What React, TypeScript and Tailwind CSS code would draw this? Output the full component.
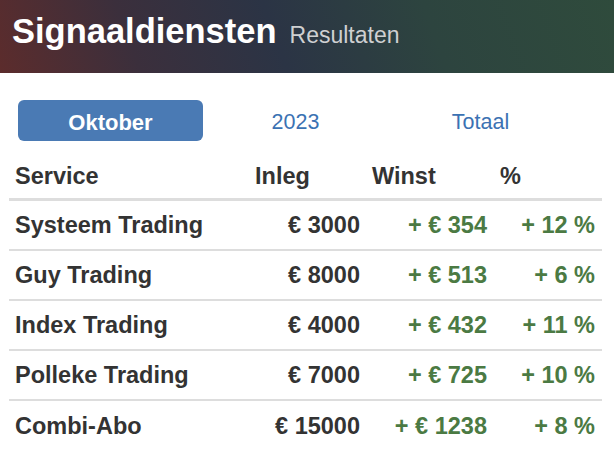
import React from 'react';

type Row = {
  name: string;
  inleg: string;
  winst: string;
  pct: string;
};

const rows: Row[] = [
  { name: 'Systeem Trading', inleg: '€ 3000', winst: '+ € 354', pct: '+ 12 %' },
  { name: 'Guy Trading', inleg: '€ 8000', winst: '+ € 513', pct: '+ 6 %' },
  { name: 'Index Trading', inleg: '€ 4000', winst: '+ € 432', pct: '+ 11 %' },
  { name: 'Polleke Trading', inleg: '€ 7000', winst: '+ € 725', pct: '+ 10 %' },
  { name: 'Combi-Abo', inleg: '€ 15000', winst: '+ € 1238', pct: '+ 8 %' },
];

const tabs = ['Oktober', '2023', 'Totaal'];

export default function App() {
  const active = 'Oktober';

  return (
    <div className="w-[614px] h-[456px] overflow-hidden bg-white font-['Liberation_Sans',Arial,sans-serif] text-[#333]">
      {/* Header */}
      <header className="h-[73px] bg-[linear-gradient(70deg,#5c2c2c_0%,#3b2f3c_22%,#2b3445_45%,#2d443f_70%,#2f4b3c_100%)] pl-[12px] pt-[14px]">
        <div className="flex items-baseline gap-[13px] leading-none">
          <h1 className="text-[34.5px] font-bold text-white">Signaaldiensten</h1>
          <span className="text-[23px] text-[#cfd0d2]">Resultaten</span>
        </div>
      </header>

      {/* Tabs */}
      <nav className="mt-[27px] ml-[18px] flex">
        {tabs.map((tab) => (
          <button
            key={tab}
            className={
              tab === active
                ? 'w-[185px] h-[41px] rounded-[6px] bg-[#4a7ab4] pt-[3px] text-[22px] font-bold text-white'
                : 'w-[185px] h-[41px] pt-[3px] text-[21.5px] text-[#3b72b3]'
            }
          >
            {tab}
          </button>
        ))}
      </nav>

      {/* Table */}
      <div className="ml-[9px] w-[593px] text-[23.5px] font-bold leading-none">
        <div className="grid h-[60px] grid-cols-[239px_118px_128px_108px] items-end border-b-[3px] border-[#dddddd] pb-[10px]">
          <div className="px-[6px]">Service</div>
          <div className="px-[7px]">Inleg</div>
          <div className="px-[6px]">Winst</div>
          <div className="px-[6px]">%</div>
        </div>
        {rows.map((row, i) => (
          <div
            key={row.name}
            className={
              i < rows.length - 1
                ? 'grid h-[50px] grid-cols-[239px_118px_128px_108px] items-center border-b-2 border-[#dddddd] pt-[2px]'
                : 'grid h-[50px] grid-cols-[239px_118px_128px_108px] items-center pt-[2px]'
            }
          >
            <div className="px-[6px]">{row.name}</div>
            <div className="pr-[6px] text-right">{row.inleg}</div>
            <div className="pr-[7px] text-right text-[#4b7a43]">{row.winst}</div>
            <div className="pr-[7px] text-right text-[#4b7a43]">{row.pct}</div>
          </div>
        ))}
      </div>
    </div>
  );
}
